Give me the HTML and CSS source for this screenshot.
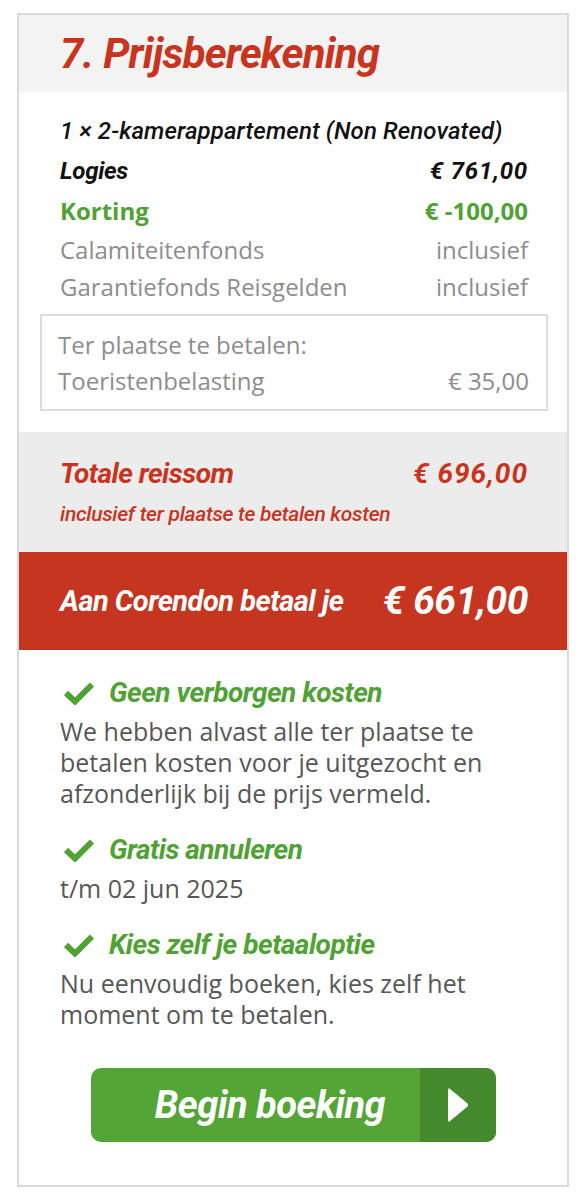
FILE: index.html
```html
<!DOCTYPE html>
<html>
	<head>
		<meta charset="utf-8">
		<title>Prijsberekening</title>
		<link rel="stylesheet" href="styles.css">
	</head>
	<body>
		<div class="card">
			<div class="card-head">
				<h2>7. Prijsberekening</h2>
			</div>

			<div class="lines">
				<div class="room">1 × 2-kamerappartement (Non Renovated)</div>
				<div class="row strong"><span>Logies</span><span class="amount">€ 761,00</span></div>
				<div class="row discount"><span>Korting</span><span>€ -100,00</span></div>
				<div class="row muted"><span>Calamiteitenfonds</span><span>inclusief</span></div>
				<div class="row muted"><span>Garantiefonds Reisgelden</span><span>inclusief</span></div>

				<div class="local">
					<div class="local-title">Ter plaatse te betalen:</div>
					<div class="row"><span>Toeristenbelasting</span><span>€ 35,00</span></div>
				</div>
			</div>

			<div class="total">
				<div class="row"><span>Totale reissom</span><span class="amount">€ 696,00</span></div>
				<div class="note">inclusief ter plaatse te betalen kosten</div>
			</div>

			<div class="pay">
				<span>Aan Corendon betaal je</span>
				<span class="pay-amount">€ 661,00</span>
			</div>

			<ul class="usps">
				<li>
					<h4><svg class="check" viewBox="0 0 32 24"><path d="M3 12 L12 20.5 L29 3.5"/></svg>Geen verborgen kosten</h4>
					<p>We hebben alvast alle ter plaatse te betalen kosten voor je uitgezocht en afzonderlijk bij de prijs vermeld.</p>
				</li>
				<li>
					<h4><svg class="check" viewBox="0 0 32 24"><path d="M3 12 L12 20.5 L29 3.5"/></svg>Gratis annuleren</h4>
					<p>t/m 02 jun 2025</p>
				</li>
				<li>
					<h4><svg class="check" viewBox="0 0 32 24"><path d="M3 12 L12 20.5 L29 3.5"/></svg>Kies zelf je betaaloptie</h4>
					<p>Nu eenvoudig boeken, kies zelf het moment om te betalen.</p>
				</li>
			</ul>

			<div class="cta">
				<button class="btn-book">
					<span class="btn-label">Begin boeking</span>
					<span class="btn-arrow"><svg viewBox="0 0 22 36"><path d="M3 2 Q1 0 1 4 L1 32 Q1 36 3 34 L20 20 Q22 18 20 16 Z"/></svg></span>
				</button>
			</div>
		</div>
	</body>
</html>
```

FILE: styles.css
```css
*{margin: 0;padding: 0;box-sizing: border-box;}
body{
	margin: 13px 0 0 17px;
	font-family: "Open Sans", "Liberation Sans", sans-serif;
	background: #fff;
}
.card{
	width: 552px;
	border: 2px solid #d9d9d9;
}
.card-head{
	background: #f3f3f3;
	height: 77px;
	padding: 0 41px;
	display: flex;
	align-items: center;
}
.card-head h2{
	font-family: Roboto, sans-serif;
	font-style: italic;
	font-weight: 700;
	font-size: 42px;
	letter-spacing: -0.8px;
	color: #c8341e;
}

.lines{
	padding: 19px 39px 21px 41px;
}
.row{
	display: flex;
	justify-content: space-between;
}
.room{
	font-family: Roboto, sans-serif;
	font-style: italic;
	font-weight: 500;
	font-size: 24px;
	letter-spacing: 0.1px;
	line-height: 40px;
	color: #111;
}
.row.strong{
	font-family: Roboto, sans-serif;
	font-style: italic;
	font-weight: 700;
	font-size: 24px;
	letter-spacing: -0.3px;
	line-height: 40px;
	color: #111;
}
.row.strong .amount{
	letter-spacing: 0.8px;
}
.row.discount{
	font-weight: 700;
	font-size: 24px;
	line-height: 40px;
	color: #4fa233;
}
.row.muted{
	font-size: 24px;
	line-height: 37px;
	color: #8d8d8d;
}
.local{
	margin: 9px -20px 0 -20px;
	border: 2px solid #dcdcdc;
	padding: 11px 17px 10px 16px;
	font-size: 24px;
	line-height: 36px;
	color: #8d8d8d;
}

.total{
	background: #ececec;
	padding: 24px 39px 26px 41px;
	color: #c8341e;
	font-family: Roboto, sans-serif;
	font-style: italic;
	font-weight: 700;
}
.total .row{
	font-size: 28px;
	line-height: 36px;
	letter-spacing: -0.5px;
}
.total .row .amount{
	letter-spacing: 1px;
}
.total .note{
	margin-top: 10px;
	font-size: 21px;
	font-weight: 500;
	line-height: 24px;
	letter-spacing: -0.3px;
}

.pay{
	background: #c5351f;
	height: 98px;
	padding: 0 39px 0 41px;
	display: flex;
	justify-content: space-between;
	align-items: center;
	color: #fff;
	font-family: Roboto, sans-serif;
	font-style: italic;
	font-weight: 700;
	font-size: 29px;
	letter-spacing: -0.5px;
}
.pay-amount{
	font-size: 39px;
}

.usps{
	list-style: none;
	padding: 27px 39px 0 41px;
}
.usps li + li{
	margin-top: 25px;
}
.usps h4{
	display: flex;
	align-items: center;
	font-family: Roboto, sans-serif;
	font-style: italic;
	font-weight: 700;
	font-size: 28px;
	letter-spacing: -0.5px;
	line-height: 32px;
	color: #4fa233;
}
.check{
	width: 32px;height: 24px;
	margin: 0 14px 0 3px;
	fill: none;
	stroke: #4fa233;
	stroke-width: 6;
}
.usps p{
	margin-top: 7px;
	font-size: 25px;
	line-height: 31px;
	color: #575757;
}

.cta{
	padding: 38px 0 43px;
	display: flex;
	justify-content: center;
}
.btn-book{
	width: 405px;height: 74px;
	display: flex;
	border: 0;outline: 0;
	border-radius: 10px;
	overflow: hidden;
	background: #53a535;
	color: #fff;
	cursor: pointer;
}
.btn-label{
	flex: 1;
	display: flex;
	align-items: center;
	justify-content: center;
	padding-left: 30px;
	font-family: Roboto, sans-serif;
	font-style: italic;
	font-weight: 700;
	font-size: 38px;
	letter-spacing: -0.5px;
}
.btn-arrow{
	width: 76px;
	background: #448a2c;
	display: flex;
	align-items: center;
	justify-content: center;
}
.btn-arrow svg{
	width: 22px;height: 36px;
	fill: #fff;
}
```
